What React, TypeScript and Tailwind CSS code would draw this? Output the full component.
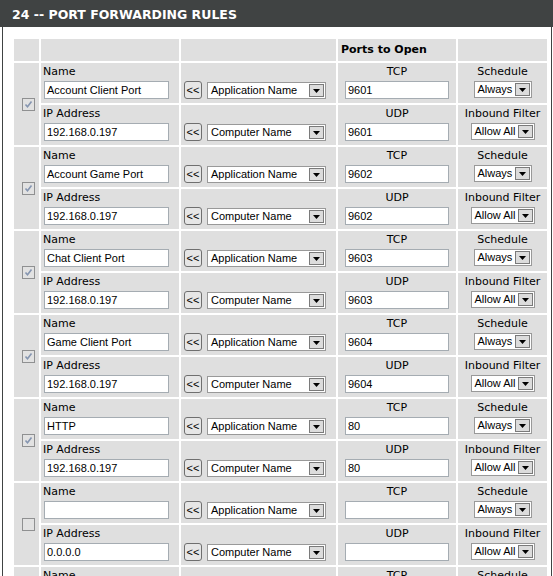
import React from "react";

type Rule = { name: string; ip: string; tcp: string; udp: string; checked: boolean };

const rules: Rule[] = [
  { name: "Account Client Port", ip: "192.168.0.197", tcp: "9601", udp: "9601", checked: true },
  { name: "Account Game Port", ip: "192.168.0.197", tcp: "9602", udp: "9602", checked: true },
  { name: "Chat Client Port", ip: "192.168.0.197", tcp: "9603", udp: "9603", checked: true },
  { name: "Game Client Port", ip: "192.168.0.197", tcp: "9604", udp: "9604", checked: true },
  { name: "HTTP", ip: "192.168.0.197", tcp: "80", udp: "80", checked: true },
  { name: "", ip: "0.0.0.0", tcp: "", udp: "", checked: false },
  { name: "", ip: "0.0.0.0", tcp: "", udp: "", checked: false },
  { name: "", ip: "0.0.0.0", tcp: "", udp: "", checked: false },
];

const cell = "bg-[#dfdfdf]";
const label = "h-[16px] leading-[16px] text-[11px] text-black font-['DejaVu_Sans',sans-serif]";
const inputText = "text-[11px] text-black font-['Liberation_Sans',sans-serif]";

function Arrow() {
  return (
    <span className="mr-[1px] flex h-[13px] w-[15px] items-end justify-center border border-[#7a7a7a] bg-[#dcdcdc] pb-[3px]">
      <svg width="7" height="4" viewBox="0 0 7 4">
        <path d="M0 0 H7 L3.5 4 Z" fill="#000" />
      </svg>
    </span>
  );
}

function Select({ text, w }: { text: string; w: string }) {
  return (
    <div className={`flex h-[17px] items-center border border-[#999] bg-white ${w}`}>
      <span className={`flex-1 pl-[3px] leading-[15px] ${inputText}`}>{text}</span>
      <Arrow />
    </div>
  );
}

function TextBox({ value, w }: { value: string; w: string }) {
  return (
    <div className={`h-[18px] border border-[#a5acb2] bg-white px-[2px] leading-[16px] ${inputText} ${w}`}>
      {value}
    </div>
  );
}

function Back() {
  return (
    <div className="flex h-[18px] w-[18px] items-center justify-center rounded-[3px] border border-[#6f6f6f] bg-[#e6e6e6] text-[11px] leading-none text-black font-['Liberation_Sans',sans-serif]">
      &lt;&lt;
    </div>
  );
}

function Check({ checked }: { checked: boolean }) {
  return (
    <div className="flex h-[13px] w-[13px] items-center justify-center border border-[#8f9091] bg-[#e2e2e2]">
      {checked && (
        <svg width="9" height="9" viewBox="0 0 9 9">
          <path d="M1.5 4.5 L3.5 6.8 L7.5 1.5" stroke="#8595b0" strokeWidth="1.6" fill="none" />
        </svg>
      )}
    </div>
  );
}

function LeftCell({ title, value }: { title: string; value: string }) {
  return (
    <div className={`${cell} pl-[2px] pt-[1px]`}>
      <div className={label}>{title}</div>
      <div className="mt-[1px] pl-[1px]">
        <TextBox value={value} w="w-[125px]" />
      </div>
    </div>
  );
}

function MidCell({ text }: { text: string }) {
  return (
    <div className={`${cell} flex items-start gap-[5px] pl-[3px] pt-[18px]`}>
      <Back />
      <div className="pt-[1px]">
        <Select text={text} w="w-[119px]" />
      </div>
    </div>
  );
}

function PortCell({ title, value }: { title: string; value: string }) {
  return (
    <div className={`${cell} flex flex-col items-center pt-[1px]`}>
      <div className={label}>{title}</div>
      <div className="mt-[1px]">
        <TextBox value={value} w="w-[104px]" />
      </div>
    </div>
  );
}

function RightCell({ title, text, w }: { title: string; text: string; w: string }) {
  return (
    <div className={`${cell} flex flex-col items-center pt-[1px]`}>
      <div className={label}>{title}</div>
      <div className="mt-[1px]">
        <Select text={text} w={w} />
      </div>
    </div>
  );
}

export default function App() {
  return (
    <div className="h-[576px] w-[553px] overflow-hidden bg-white">
      <div className="h-[27px] bg-[#404343] pl-[12px] pt-[2px] text-[12.5px] font-bold leading-[25px] text-white font-['DejaVu_Sans',sans-serif]">
        24 -- PORT FORWARDING RULES
      </div>
      <div className="ml-[2px] w-[550px] border-x border-[#404343] pb-[20px] pl-[11px] pt-[12px]">
        <div className="grid grid-cols-[25px_138px_155px_118px_89px] grid-rows-[22px] auto-rows-[40px] gap-[2px]">
          <div className={cell} />
          <div className={cell} />
          <div className={cell} />
          <div className={`${cell} pl-[3px] text-[11px] font-bold leading-[22px] text-black font-['DejaVu_Sans',sans-serif]`}>
            Ports to Open
          </div>
          <div className={cell} />
          {rules.map((r, i) => (
            <React.Fragment key={i}>
              <div className={`${cell} row-span-2 flex items-center pl-[8px]`}>
                <Check checked={r.checked} />
              </div>
              <LeftCell title="Name" value={r.name} />
              <MidCell text="Application Name" />
              <PortCell title="TCP" value={r.tcp} />
              <RightCell title="Schedule" text="Always" w="w-[58px]" />
              <LeftCell title="IP Address" value={r.ip} />
              <MidCell text="Computer Name" />
              <PortCell title="UDP" value={r.udp} />
              <RightCell title="Inbound Filter" text="Allow All" w="w-[64px]" />
            </React.Fragment>
          ))}
        </div>
      </div>
    </div>
  );
}
